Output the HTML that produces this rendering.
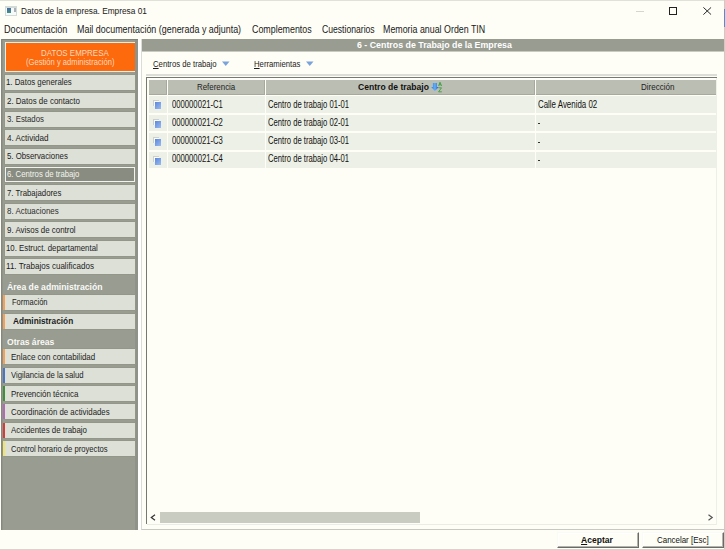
<!DOCTYPE html>
<html><head><meta charset="utf-8"><style>
html,body{margin:0;padding:0;}
body{width:725px;height:550px;position:relative;overflow:hidden;background:#fefef6;font-family:"Liberation Sans", sans-serif;}
</style></head><body>
<div style="position:absolute;left:0px;top:0px;width:725px;height:1px;background:#e0e2da;"></div>
<div style="position:absolute;left:724px;top:0px;width:1px;height:550px;background:#c9ccc3;"></div>
<div style="position:absolute;left:724px;top:9px;width:1px;height:18px;background:#4a8fd8;"></div>
<div style="position:absolute;left:0px;top:549px;width:725px;height:1px;background:#d4d6ce;"></div>
<div style="position:absolute;left:5px;top:6px;width:10px;height:7px;border:1px solid #d3dbd8;border-top:2px solid #d3dbd8;background:#f7faf8"></div>
<div style="position:absolute;left:7px;top:8px;width:4px;height:5px;background:#4f8a8a;background:linear-gradient(160deg,#4a62a8,#3f9a7a);"></div>
<div style="position:absolute;left:14px;top:8px;width:2px;height:4px;background:#aab2b8;"></div>
<div style="position:absolute;left:21.00px;top:6.10px;font-size:9.6px;line-height:9.6px;font-weight:400;color:#1a1a1a;white-space:nowrap;transform:scaleX(0.8648);transform-origin:0 0;">Datos de la empresa. Empresa 01</div>
<div style="position:absolute;left:636px;top:11px;width:8px;height:1px;background:#d6d6d0;"></div>
<div style="position:absolute;left:669px;top:7px;width:6px;height:6px;border:1.2px solid #222"></div>
<svg style="position:absolute;left:703px;top:6.6px" width="8.5" height="8" viewBox="0 0 8.5 8"><path d="M0.4 0.4 L8.1 7.6 M8.1 0.4 L0.4 7.6" stroke="#2a2a2a" stroke-width="1"/></svg>
<div style="position:absolute;left:4.11px;top:24.60px;font-size:10.3px;line-height:10.3px;font-weight:400;color:#1a1a1a;white-space:nowrap;transform:scaleX(0.8857);transform-origin:0 0;">Documentación</div>
<div style="position:absolute;left:77.03px;top:24.60px;font-size:10.3px;line-height:10.3px;font-weight:400;color:#1a1a1a;white-space:nowrap;transform:scaleX(0.8660);transform-origin:0 0;">Mail documentación (generada y adjunta)</div>
<div style="position:absolute;left:251.50px;top:24.60px;font-size:10.3px;line-height:10.3px;font-weight:400;color:#1a1a1a;white-space:nowrap;transform:scaleX(0.8623);transform-origin:0 0;">Complementos</div>
<div style="position:absolute;left:321.70px;top:24.60px;font-size:10.3px;line-height:10.3px;font-weight:400;color:#1a1a1a;white-space:nowrap;transform:scaleX(0.8365);transform-origin:0 0;">Cuestionarios</div>
<div style="position:absolute;left:383.14px;top:24.60px;font-size:10.3px;line-height:10.3px;font-weight:400;color:#1a1a1a;white-space:nowrap;transform:scaleX(0.8602);transform-origin:0 0;">Memoria anual Orden TIN</div>
<div style="position:absolute;left:1px;top:39px;width:137px;height:491px;background:#989c91;"></div>
<div style="position:absolute;left:1px;top:39px;width:137px;height:1px;background:#7f8278;"></div>
<div style="position:absolute;left:1px;top:39px;width:1px;height:491px;background:#85887e;"></div>
<div style="position:absolute;left:2px;top:40px;width:1px;height:490px;background:#8f9388;"></div>
<div style="position:absolute;left:135px;top:40px;width:3px;height:490px;background:#8f9288;"></div>
<div style="position:absolute;left:5px;top:42px;width:130px;height:30px;background:#e8efe8;"></div>
<div style="position:absolute;left:6px;top:43px;width:129px;height:28px;background:#fd690d;"></div>
<div style="position:absolute;left:40.60px;top:47.80px;font-size:9.5px;line-height:9.5px;font-weight:400;color:#fbd9bd;white-space:nowrap;transform:scaleX(0.8370);transform-origin:0 0;">DATOS EMPRESA</div>
<div style="position:absolute;left:25.70px;top:57.90px;font-size:9.3px;line-height:9.3px;font-weight:400;color:#fbd9bd;white-space:nowrap;transform:scaleX(0.8194);transform-origin:0 0;">(Gestión y administración)</div>
<div style="position:absolute;left:5px;top:75.0px;width:130px;height:15px;background:#dde0d7;box-shadow:0 0 0 1px #939789;"></div>
<div style="position:absolute;left:6.40px;top:77.30px;font-size:9.8px;line-height:9.8px;font-weight:400;color:#1c1c1c;white-space:nowrap;transform:scaleX(0.8000);transform-origin:0 0;">1. Datos generales</div>
<div style="position:absolute;left:5px;top:93.4px;width:130px;height:15px;background:#dde0d7;box-shadow:0 0 0 1px #939789;"></div>
<div style="position:absolute;left:7.20px;top:95.70px;font-size:9.8px;line-height:9.8px;font-weight:400;color:#1c1c1c;white-space:nowrap;transform:scaleX(0.8122);transform-origin:0 0;">2. Datos de contacto</div>
<div style="position:absolute;left:5px;top:111.8px;width:130px;height:15px;background:#dde0d7;box-shadow:0 0 0 1px #939789;"></div>
<div style="position:absolute;left:7.20px;top:114.10px;font-size:9.8px;line-height:9.8px;font-weight:400;color:#2e2e2e;white-space:nowrap;transform:scaleX(0.7978);transform-origin:0 0;">3. Estados</div>
<div style="position:absolute;left:5px;top:130.2px;width:130px;height:15px;background:#dde0d7;box-shadow:0 0 0 1px #939789;"></div>
<div style="position:absolute;left:7.20px;top:132.50px;font-size:9.8px;line-height:9.8px;font-weight:400;color:#1c1c1c;white-space:nowrap;transform:scaleX(0.8300);transform-origin:0 0;">4. Actividad</div>
<div style="position:absolute;left:5px;top:148.6px;width:130px;height:15px;background:#dde0d7;box-shadow:0 0 0 1px #939789;"></div>
<div style="position:absolute;left:7.20px;top:150.90px;font-size:9.8px;line-height:9.8px;font-weight:400;color:#1c1c1c;white-space:nowrap;transform:scaleX(0.7974);transform-origin:0 0;">5. Observaciones</div>
<div style="position:absolute;left:5px;top:167.0px;width:130px;height:15px;background:#f2f3ee;box-shadow:0 0 0 1px #939789;"></div>
<div style="position:absolute;left:6px;top:168.0px;width:128px;height:13px;background:#888c81;"></div>
<div style="position:absolute;left:7.20px;top:169.30px;font-size:9.8px;line-height:9.8px;font-weight:400;color:#f4f5ee;white-space:nowrap;transform:scaleX(0.7912);transform-origin:0 0;">6. Centros de trabajo</div>
<div style="position:absolute;left:5px;top:185.4px;width:130px;height:15px;background:#dde0d7;box-shadow:0 0 0 1px #939789;"></div>
<div style="position:absolute;left:7.20px;top:187.70px;font-size:9.8px;line-height:9.8px;font-weight:400;color:#1c1c1c;white-space:nowrap;transform:scaleX(0.7985);transform-origin:0 0;">7. Trabajadores</div>
<div style="position:absolute;left:5px;top:203.8px;width:130px;height:15px;background:#dde0d7;box-shadow:0 0 0 1px #939789;"></div>
<div style="position:absolute;left:7.20px;top:206.10px;font-size:9.8px;line-height:9.8px;font-weight:400;color:#2e2e2e;white-space:nowrap;transform:scaleX(0.8125);transform-origin:0 0;">8. Actuaciones</div>
<div style="position:absolute;left:5px;top:222.2px;width:130px;height:15px;background:#dde0d7;box-shadow:0 0 0 1px #939789;"></div>
<div style="position:absolute;left:7.20px;top:224.50px;font-size:9.8px;line-height:9.8px;font-weight:400;color:#1c1c1c;white-space:nowrap;transform:scaleX(0.8095);transform-origin:0 0;">9. Avisos de control</div>
<div style="position:absolute;left:5px;top:240.6px;width:130px;height:15px;background:#dde0d7;box-shadow:0 0 0 1px #939789;"></div>
<div style="position:absolute;left:6.40px;top:242.90px;font-size:9.8px;line-height:9.8px;font-weight:400;color:#1c1c1c;white-space:nowrap;transform:scaleX(0.7982);transform-origin:0 0;">10. Estruct. departamental</div>
<div style="position:absolute;left:5px;top:259.0px;width:130px;height:15px;background:#dde0d7;box-shadow:0 0 0 1px #939789;"></div>
<div style="position:absolute;left:6.38px;top:261.30px;font-size:9.8px;line-height:9.8px;font-weight:400;color:#1c1c1c;white-space:nowrap;transform:scaleX(0.8208);transform-origin:0 0;">11. Trabajos cualificados</div>
<div style="position:absolute;left:6.90px;top:282.70px;font-size:9px;line-height:9px;font-weight:700;color:#fafaf6;white-space:nowrap;transform:scaleX(0.9596);transform-origin:0 0;">Área de administración</div>
<div style="position:absolute;left:5px;top:294.5px;width:130px;height:15px;background:#dde0d7;box-shadow:0 0 0 1px #939789;"></div>
<div style="position:absolute;left:2.5px;top:294.5px;width:2.5px;height:15px;background:#f5a05a;"></div>
<div style="position:absolute;left:12.10px;top:297.10px;font-size:9.6px;line-height:9.6px;font-weight:400;color:#1c1c1c;white-space:nowrap;transform:scaleX(0.7844);transform-origin:0 0;">Formación</div>
<div style="position:absolute;left:5px;top:313.7px;width:130px;height:15px;background:#dde0d7;box-shadow:0 0 0 1px #939789;"></div>
<div style="position:absolute;left:2.5px;top:313.7px;width:2.5px;height:15px;background:#f5a05a;"></div>
<div style="position:absolute;left:13.10px;top:317.30px;font-size:9.2px;line-height:9.2px;font-weight:700;color:#1c1c1c;white-space:nowrap;transform:scaleX(0.9000);transform-origin:0 0;">Administración</div>
<div style="position:absolute;left:6.90px;top:337.50px;font-size:9px;line-height:9px;font-weight:700;color:#fafaf6;white-space:nowrap;transform:scaleX(0.9560);transform-origin:0 0;">Otras áreas</div>
<div style="position:absolute;left:5px;top:349.4px;width:130px;height:15px;background:#dde0d7;box-shadow:0 0 0 1px #939789;"></div>
<div style="position:absolute;left:2.5px;top:349.4px;width:2.5px;height:15px;background:#f5a05a;"></div>
<div style="position:absolute;left:11.40px;top:352.00px;font-size:9.8px;line-height:9.8px;font-weight:400;color:#1c1c1c;white-space:nowrap;transform:scaleX(0.8136);transform-origin:0 0;">Enlace con contabilidad</div>
<div style="position:absolute;left:5px;top:367.75px;width:130px;height:15px;background:#dde0d7;box-shadow:0 0 0 1px #939789;"></div>
<div style="position:absolute;left:2.5px;top:367.75px;width:2.5px;height:15px;background:#4a74c8;"></div>
<div style="position:absolute;left:11.40px;top:370.35px;font-size:9.8px;line-height:9.8px;font-weight:400;color:#1c1c1c;white-space:nowrap;transform:scaleX(0.7902);transform-origin:0 0;">Vigilancia de la salud</div>
<div style="position:absolute;left:5px;top:386.1px;width:130px;height:15px;background:#dde0d7;box-shadow:0 0 0 1px #939789;"></div>
<div style="position:absolute;left:2.5px;top:386.1px;width:2.5px;height:15px;background:#3f8f3f;"></div>
<div style="position:absolute;left:11.40px;top:388.70px;font-size:9.8px;line-height:9.8px;font-weight:400;color:#1c1c1c;white-space:nowrap;transform:scaleX(0.8133);transform-origin:0 0;">Prevención técnica</div>
<div style="position:absolute;left:5px;top:404.45px;width:130px;height:15px;background:#dde0d7;box-shadow:0 0 0 1px #939789;"></div>
<div style="position:absolute;left:2.5px;top:404.45px;width:2.5px;height:15px;background:#b468b8;"></div>
<div style="position:absolute;left:11.40px;top:407.05px;font-size:9.8px;line-height:9.8px;font-weight:400;color:#1c1c1c;white-space:nowrap;transform:scaleX(0.8016);transform-origin:0 0;">Coordinación de actividades</div>
<div style="position:absolute;left:5px;top:422.8px;width:130px;height:15px;background:#dde0d7;box-shadow:0 0 0 1px #939789;"></div>
<div style="position:absolute;left:2.5px;top:422.8px;width:2.5px;height:15px;background:#d63a3a;"></div>
<div style="position:absolute;left:11.40px;top:425.40px;font-size:9.8px;line-height:9.8px;font-weight:400;color:#1c1c1c;white-space:nowrap;transform:scaleX(0.8064);transform-origin:0 0;">Accidentes de trabajo</div>
<div style="position:absolute;left:5px;top:441.15px;width:130px;height:15px;background:#dde0d7;box-shadow:0 0 0 1px #939789;"></div>
<div style="position:absolute;left:2.5px;top:441.15px;width:2.5px;height:15px;background:#f2e46a;"></div>
<div style="position:absolute;left:11.40px;top:443.75px;font-size:9.8px;line-height:9.8px;font-weight:400;color:#1c1c1c;white-space:nowrap;transform:scaleX(0.7815);transform-origin:0 0;">Control horario de proyectos</div>
<div style="position:absolute;left:138px;top:39px;width:3px;height:491px;background:#ffffff;"></div>
<div style="position:absolute;left:141px;top:39px;width:583px;height:491px;background:#fefef6;border-left:1px solid #dcdcd6;border-bottom:1px solid #c8c8c2;box-sizing:border-box;"></div>
<div style="position:absolute;left:142px;top:39px;width:582px;height:12px;background:#989c91;"></div>
<div style="position:absolute;left:142px;top:51px;width:582px;height:1px;background:#c9cac2;"></div>
<div style="position:absolute;left:357.20px;top:39.90px;font-size:9.5px;line-height:9.5px;font-weight:700;color:#ffffff;white-space:nowrap;transform:scaleX(0.9281);transform-origin:0 0;">6 - Centros de Trabajo de la Empresa</div>
<div style="position:absolute;left:152.70px;top:59.00px;font-size:9.5px;line-height:9.5px;font-weight:400;color:#1c1c1c;white-space:nowrap;transform:scaleX(0.8141);transform-origin:0 0;"><span style="text-decoration:underline">C</span>entros de trabajo</div>
<div style="position:absolute;left:253.70px;top:59.00px;font-size:9.5px;line-height:9.5px;font-weight:400;color:#1c1c1c;white-space:nowrap;transform:scaleX(0.8123);transform-origin:0 0;"><span style="text-decoration:underline">H</span>erramientas</div>
<svg style="position:absolute;left:222px;top:61px" width="8" height="6"><path d="M0 0.5 H7.5 L3.75 5 Z" fill="#7aa3dc"/></svg>
<svg style="position:absolute;left:306px;top:61px" width="8" height="6"><path d="M0 0.5 H7.5 L3.75 5 Z" fill="#7aa3dc"/></svg>
<div style="position:absolute;left:146px;top:74px;width:571px;height:2px;background:#dcddd6;"></div>
<div style="position:absolute;left:146px;top:77px;width:571px;height:447px;background:#fefef6;"></div>
<div style="position:absolute;left:146px;top:77px;width:571px;height:1px;background:#767970;"></div>
<div style="position:absolute;left:146px;top:77px;width:1px;height:447px;background:#767970;"></div>
<div style="position:absolute;left:147px;top:78px;width:570px;height:1px;background:#ffffff;"></div>
<div style="position:absolute;left:149px;top:80px;width:18px;height:14.6px;background:#bbbeb3;box-shadow:inset -1px -1px 0 #a6a99e;"></div>
<div style="position:absolute;left:168px;top:80px;width:97px;height:14.6px;background:#bbbeb3;box-shadow:inset -1px -1px 0 #a6a99e;"></div>
<div style="position:absolute;left:266px;top:80px;width:269px;height:14.6px;background:#bbbeb3;box-shadow:inset -1px -1px 0 #a6a99e;"></div>
<div style="position:absolute;left:536px;top:80px;width:181px;height:14.6px;background:#bbbeb3;box-shadow:inset 0 -1px 0 #a6a99e;"></div>
<div style="position:absolute;left:197.00px;top:81.90px;font-size:9.5px;line-height:9.5px;font-weight:400;color:#222;white-space:nowrap;transform:scaleX(0.8326);transform-origin:0 0;">Referencia</div>
<div style="position:absolute;left:357.60px;top:81.90px;font-size:9.5px;line-height:9.5px;font-weight:700;color:#111;white-space:nowrap;transform:scaleX(0.9025);transform-origin:0 0;">Centro de trabajo</div>
<div style="position:absolute;left:640.80px;top:81.90px;font-size:9.5px;line-height:9.5px;font-weight:400;color:#222;white-space:nowrap;transform:scaleX(0.8436);transform-origin:0 0;">Dirección</div>
<svg style="position:absolute;left:430px;top:81px" width="14" height="13" viewBox="0 0 14 13"><defs><linearGradient id="ag" x1="0" x2="1"><stop offset="0" stop-color="#2d7ce6"/><stop offset="0.5" stop-color="#62b0f6"/><stop offset="1" stop-color="#1450c8"/></linearGradient></defs><path d="M2.9 2 H6.9 V6 H8.8 L4.9 10 L1.2 6 H2.9 Z" fill="url(#ag)"/><path d="M8.6 5 L10 1.2 L11.6 5 M9.1 3.8 H11" stroke="#2f9a35" stroke-width="0.8" fill="none"/><path d="M8.6 6.8 H11.5 L8.6 10.8 H11.8" stroke="#2f9a35" stroke-width="0.8" fill="none"/></svg>
<div style="position:absolute;left:149px;top:96.3px;width:18px;height:16.3px;background:#edf0e6;"></div>
<div style="position:absolute;left:168px;top:96.3px;width:97px;height:16.3px;background:#edf0e6;"></div>
<div style="position:absolute;left:266px;top:96.3px;width:269px;height:16.3px;background:#edf0e6;"></div>
<div style="position:absolute;left:536px;top:96.3px;width:181px;height:16.3px;background:#edf0e6;"></div>
<div style="position:absolute;left:152.5px;top:100.1px;width:5px;height:5px;background:#fbfbf8;border-top:1px solid #cfd0cc;border-left:1px solid #cfd0cc;"></div>
<div style="position:absolute;left:154.6px;top:102.1px;width:6.6px;height:6.9px;background:#6c95e0;background:linear-gradient(135deg,#5a86dc,#9cbcf0);"></div>
<div style="position:absolute;left:171.90px;top:99.50px;font-size:10px;line-height:10px;font-weight:400;color:#111;white-space:nowrap;transform:scaleX(0.7682);transform-origin:0 0;">000000021-C1</div>
<div style="position:absolute;left:268.00px;top:99.50px;font-size:10px;line-height:10px;font-weight:400;color:#111;white-space:nowrap;transform:scaleX(0.7676);transform-origin:0 0;">Centro de trabajo 01-01</div>
<div style="position:absolute;left:537.90px;top:99.50px;font-size:10px;line-height:10px;font-weight:400;color:#111;white-space:nowrap;transform:scaleX(0.7907);transform-origin:0 0;">Calle Avenida 02</div>
<div style="position:absolute;left:149px;top:115px;width:18px;height:16.3px;background:#edf0e6;"></div>
<div style="position:absolute;left:168px;top:115px;width:97px;height:16.3px;background:#edf0e6;"></div>
<div style="position:absolute;left:266px;top:115px;width:269px;height:16.3px;background:#edf0e6;"></div>
<div style="position:absolute;left:536px;top:115px;width:181px;height:16.3px;background:#edf0e6;"></div>
<div style="position:absolute;left:152.5px;top:118.8px;width:5px;height:5px;background:#fbfbf8;border-top:1px solid #cfd0cc;border-left:1px solid #cfd0cc;"></div>
<div style="position:absolute;left:154.6px;top:120.8px;width:6.6px;height:6.9px;background:#6c95e0;background:linear-gradient(135deg,#5a86dc,#9cbcf0);"></div>
<div style="position:absolute;left:171.90px;top:117.50px;font-size:10px;line-height:10px;font-weight:400;color:#111;white-space:nowrap;transform:scaleX(0.7682);transform-origin:0 0;">000000021-C2</div>
<div style="position:absolute;left:268.00px;top:117.50px;font-size:10px;line-height:10px;font-weight:400;color:#111;white-space:nowrap;transform:scaleX(0.7676);transform-origin:0 0;">Centro de trabajo 02-01</div>
<div style="position:absolute;left:538px;top:122.8px;width:2px;height:1px;background:#333;"></div>
<div style="position:absolute;left:149px;top:133.4px;width:18px;height:16.3px;background:#edf0e6;"></div>
<div style="position:absolute;left:168px;top:133.4px;width:97px;height:16.3px;background:#edf0e6;"></div>
<div style="position:absolute;left:266px;top:133.4px;width:269px;height:16.3px;background:#edf0e6;"></div>
<div style="position:absolute;left:536px;top:133.4px;width:181px;height:16.3px;background:#edf0e6;"></div>
<div style="position:absolute;left:152.5px;top:137.2px;width:5px;height:5px;background:#fbfbf8;border-top:1px solid #cfd0cc;border-left:1px solid #cfd0cc;"></div>
<div style="position:absolute;left:154.6px;top:139.2px;width:6.6px;height:6.9px;background:#6c95e0;background:linear-gradient(135deg,#5a86dc,#9cbcf0);"></div>
<div style="position:absolute;left:171.90px;top:136.20px;font-size:10px;line-height:10px;font-weight:400;color:#111;white-space:nowrap;transform:scaleX(0.7682);transform-origin:0 0;">000000021-C3</div>
<div style="position:absolute;left:268.00px;top:136.20px;font-size:10px;line-height:10px;font-weight:400;color:#111;white-space:nowrap;transform:scaleX(0.7676);transform-origin:0 0;">Centro de trabajo 03-01</div>
<div style="position:absolute;left:538px;top:141.5px;width:2px;height:1px;background:#333;"></div>
<div style="position:absolute;left:149px;top:152px;width:18px;height:16.3px;background:#edf0e6;"></div>
<div style="position:absolute;left:168px;top:152px;width:97px;height:16.3px;background:#edf0e6;"></div>
<div style="position:absolute;left:266px;top:152px;width:269px;height:16.3px;background:#edf0e6;"></div>
<div style="position:absolute;left:536px;top:152px;width:181px;height:16.3px;background:#edf0e6;"></div>
<div style="position:absolute;left:152.5px;top:155.8px;width:5px;height:5px;background:#fbfbf8;border-top:1px solid #cfd0cc;border-left:1px solid #cfd0cc;"></div>
<div style="position:absolute;left:154.6px;top:157.8px;width:6.6px;height:6.9px;background:#6c95e0;background:linear-gradient(135deg,#5a86dc,#9cbcf0);"></div>
<div style="position:absolute;left:171.90px;top:154.40px;font-size:10px;line-height:10px;font-weight:400;color:#111;white-space:nowrap;transform:scaleX(0.7682);transform-origin:0 0;">000000021-C4</div>
<div style="position:absolute;left:268.00px;top:154.40px;font-size:10px;line-height:10px;font-weight:400;color:#111;white-space:nowrap;transform:scaleX(0.7676);transform-origin:0 0;">Centro de trabajo 04-01</div>
<div style="position:absolute;left:538px;top:159.7px;width:2px;height:1px;background:#333;"></div>
<svg style="position:absolute;left:150px;top:514px" width="7" height="7"><path d="M5 0.8 L1.3 3.5 L5 6.2" stroke="#333" stroke-width="1.2" fill="none"/></svg>
<div style="position:absolute;left:160px;top:512px;width:260px;height:11px;background:#c9cdc1;"></div>
<svg style="position:absolute;left:707px;top:514px" width="7" height="7"><path d="M1.5 0.8 L5.2 3.5 L1.5 6.2" stroke="#555" stroke-width="1.2" fill="none"/></svg>
<div style="position:absolute;left:147px;top:524px;width:570px;height:1px;background:#ecece6;"></div>
<div style="position:absolute;left:716px;top:78px;width:1px;height:447px;background:#eeefe8;"></div>
<div style="position:absolute;left:557px;top:532px;width:82px;height:16px;box-sizing:border-box;background:#fefef6;border-top:1px solid #fbfbf6;border-left:1px solid #fbfbf6;border-right:1px solid #6a6a66;border-bottom:1px solid #6a6a66;box-shadow:inset -1px -1px 0 #b4b4ae, inset 1px 1px 0 #ffffff"></div>
<div style="position:absolute;left:641.5px;top:532px;width:82px;height:16px;box-sizing:border-box;background:#fefef6;border-top:1px solid #fbfbf6;border-left:1px solid #fbfbf6;border-right:1px solid #6a6a66;border-bottom:1px solid #6a6a66;box-shadow:inset -1px -1px 0 #b4b4ae, inset 1px 1px 0 #ffffff"></div>
<div style="position:absolute;left:581.10px;top:535.20px;font-size:9.5px;line-height:9.5px;font-weight:700;color:#111;white-space:nowrap;transform:scaleX(0.9000);transform-origin:0 0;"><span style="text-decoration:underline">A</span>ceptar</div>
<div style="position:absolute;left:657.00px;top:536.20px;font-size:9.3px;line-height:9.3px;font-weight:400;color:#111;white-space:nowrap;transform:scaleX(0.8533);transform-origin:0 0;">Cancelar [Esc]</div>
</body></html>
